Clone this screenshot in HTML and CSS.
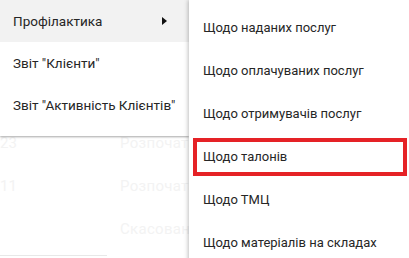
FILE: index.html
```
<!DOCTYPE html>
<html lang="uk">
<head>
    <meta charset="UTF-8">
    <title>Меню звітів</title>
    <link rel="stylesheet" href="styles.css">
</head>
<body>
<div class="page">
    <!-- таблиця під меню -->
    <div class="table">
        <div class="row"><span class="num">23</span><span class="status">Розпочата</span></div>
        <div class="row"><span class="num">11</span><span class="status">Розпочата</span></div>
        <div class="row"><span class="num"></span><span class="status">Скасована</span></div>
        <div class="table-line"></div>
    </div>

    <ul class="menu menu-main">
        <li class="item active">Профілактика<span class="arrow"></span></li>
        <li class="item">Звіт "Клієнти"</li>
        <li class="item">Звіт "Активність Клієнтів"</li>
    </ul>

    <ul class="menu menu-sub">
        <li class="item">Щодо наданих послуг</li>
        <li class="item">Щодо оплачуваних послуг</li>
        <li class="item">Щодо отримувачів послуг</li>
        <li class="item marked">Щодо талонів</li>
        <li class="item">Щодо ТМЦ</li>
        <li class="item">Щодо матеріалів на складах</li>
    </ul>
</div>
</body>
</html>
```

FILE: styles.css
```
html, body {
    margin: 0;
    padding: 0;
    background: #fff;
}
body {
    font-family: Roboto, "Noto Sans", sans-serif;
    font-size: 13px;
    color: #262626;
    overflow: hidden;
}
.page {
    position: relative;
    width: 409px;
    height: 258px;
}

/* фон - таблиця */
.table {
    padding-top: 121px;
    color: #f3f3f3;
    font-size: 15px;
}
.row {
    display: flex;
    align-items: center;
    height: 43px;
}
.num {
    width: 120px;
}
.status {
    letter-spacing: 0.3px;
}
.table-line {
    margin-top: 5px;
    width: 107px;
    height: 1px;
    background: #e8e8e8;
}

/* меню */
.menu {
    list-style: none;
    margin: 0;
    padding: 0;
    background: #fff;
}
.menu-main {
    position: absolute;
    left: 0;
    top: 0;
    width: 189px;
    padding-bottom: 10px;
    font-size: 13.5px;
    box-shadow: 0 1px 2px rgba(0, 0, 0, 0.35);
}
.menu-main .item {
    height: 42px;
    padding-left: 13px;
    padding-right: 22px;
}
.item {
    display: flex;
    align-items: center;
    position: relative;
    white-space: nowrap;
}
.item.active {
    background: #f2f2f2;
}
.arrow {
    margin-left: auto;
    width: 0;
    height: 0;
    border-top: 4px solid transparent;
    border-bottom: 4px solid transparent;
    border-left: 5px solid #111;
}

.menu-sub {
    position: absolute;
    left: 189px;
    top: 0;
    width: 240px;
    padding-top: 6px;
    height: 260px;
    box-shadow: -1px 0 4px rgba(0, 0, 0, 0.25);
}
.menu-sub .item {
    height: 43px;
    padding-left: 14px;
}
.item.marked::after {
    content: "";
    position: absolute;
    left: 4px;
    top: 3px;
    width: 206px;
    height: 30px;
    border: 4px solid #e52226;
}
```
